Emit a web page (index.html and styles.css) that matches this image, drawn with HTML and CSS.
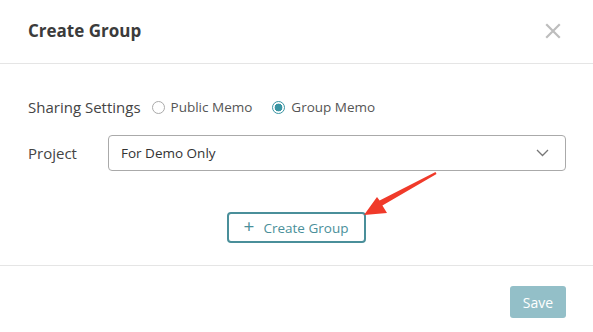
FILE: index.html
```html
<!DOCTYPE html>
<html>
<head>
<meta charset="utf-8">
<link rel="stylesheet" href="styles.css">
</head>
<body>
<div class="modal">
  <div class="modal-header">
    <h2 class="title">Create Group</h2>
    <span class="close">
      <svg width="16" height="16" viewBox="0 0 16 16"><path d="M2 2L14 14M14 2L2 14" stroke="#bdbdbd" stroke-width="2.2" stroke-linecap="square"/></svg>
    </span>
  </div>
  <div class="modal-body">
    <div class="row sharing">
      <span class="label">Sharing Settings</span>
      <label class="radio"><span class="circle"></span>Public Memo</label>
      <label class="radio checked"><span class="circle"></span>Group Memo</label>
    </div>
    <div class="row project">
      <span class="label project-label">Project</span>
      <div class="select">
        <span>For Demo Only</span>
        <svg width="13" height="8" viewBox="0 0 13 8"><path d="M1 1L6.5 6.5L12 1" fill="none" stroke="#777" stroke-width="1.3"/></svg>
      </div>
    </div>
    <div class="row action">
      <button class="create-btn"><span class="plus">+</span>Create Group</button>
    </div>
  </div>
  <div class="modal-footer">
    <button class="save-btn">Save</button>
  </div>
  <svg class="arrow" width="593" height="332" viewBox="0 0 593 332">
    <path d="M435.5 172.1 L436.5 173.9 L382.4 205.6 L387 213 L364 215 L377 197 L379.6 200.4 Z" fill="#f03a2a"/>
  </svg>
</div>
</body>
</html>
```
FILE: styles.css
```css
* { box-sizing: border-box; }
body {
  margin: 0;
  background: #fff;
  font-family: "Open Sans", "Noto Sans", sans-serif;
  color: #444;
}
.modal {
  position: relative;
  width: 593px;
  height: 332px;
}
.modal-header {
  height: 64px;
  border-bottom: 1px solid #e5e5e5;
  display: flex;
  align-items: center;
  justify-content: space-between;
  padding: 0 32px 2px 28px;
}
.title {
  margin: 0;
  font-size: 17px;
  font-weight: 700;
  color: #3b3b3b;
}
.close { display: flex; }
.modal-body {
  padding: 33px 27px 22px 28px;
  height: 202px;
  border-bottom: 1px solid #e5e5e5;
}
.row { display: flex; align-items: center; }
.sharing { height: 20px; }
.label { font-size: 15px; color: #444; }
.radio {
  display: flex;
  align-items: center;
  font-size: 13.5px;
  color: #555;
  margin-left: 11px;
}
.radio + .radio { margin-left: 20px; }
.circle {
  width: 13px;
  height: 13px;
  border: 1px solid #aaa;
  border-radius: 50%;
  margin-right: 6px;
  display: inline-block;
}
.checked .circle {
  border-color: #3a95a3;
  background: radial-gradient(circle, #3a95a3 0 3.6px, #fff 4.2px);
}
.project { margin-top: 18px; }
.project-label { width: 80px; }
.select {
  flex: 1;
  height: 36px;
  border: 1px solid #aaa;
  border-radius: 4px;
  display: flex;
  align-items: center;
  justify-content: space-between;
  padding: 0 16px 0 12px;
  font-size: 13.5px;
  color: #333;
}
.action { justify-content: center; margin-top: 41px; padding-right: 2px; }
.create-btn {
  height: 31px;
  width: 139px;
  border: 2px solid #4a8f9a;
  border-radius: 4px;
  background: #fff;
  color: #4a8f9a;
  font-family: inherit;
  font-size: 13.5px;
  font-weight: 500;
  display: flex;
  align-items: center;
  justify-content: center;
}
.plus { font-size: 19px; margin-right: 9px; line-height: 1; margin-top: -2px; }
.modal-footer {
  display: flex;
  justify-content: flex-end;
  padding: 20px 27px 0 0;
}
.save-btn {
  width: 56px;
  height: 32px;
  border: none;
  border-radius: 3px;
  background: #93bfc8;
  color: #fff;
  font-family: inherit;
  font-size: 14px;
}
.arrow {
  position: absolute;
  left: 0;
  top: 0;
  pointer-events: none;
}
```
